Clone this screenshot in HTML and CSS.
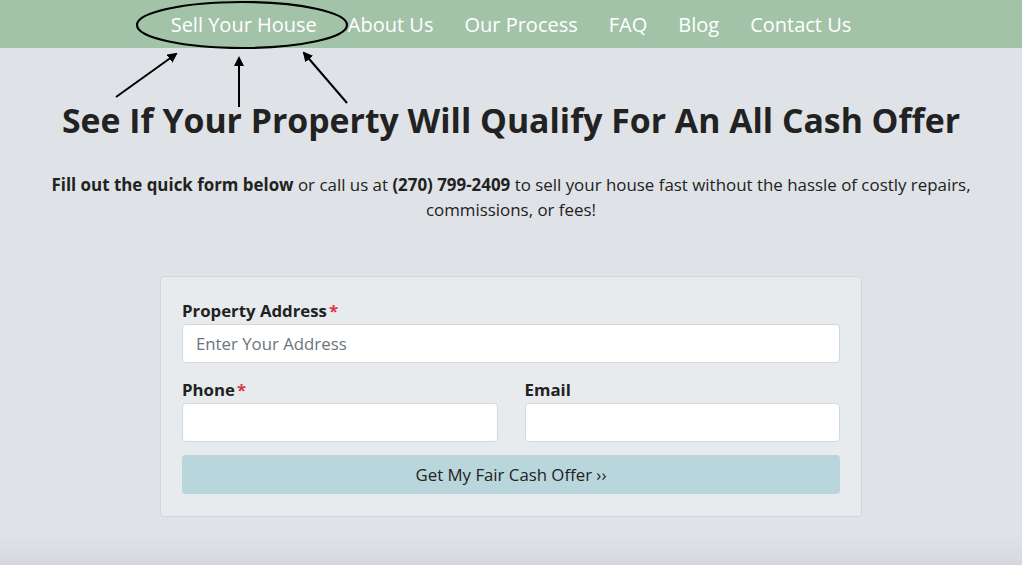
FILE: index.html
```html
<!DOCTYPE html>
<html lang="en">
<head>
<meta charset="utf-8">
<title>Sell Your House</title>
<link rel="stylesheet" href="styles.css">
</head>
<body>
<div class="page">
  <header class="topbar">
    <nav class="nav">
      <a href="#">Sell Your House</a>
      <a href="#">About Us</a>
      <a href="#">Our Process</a>
      <a href="#">FAQ</a>
      <a href="#">Blog</a>
      <a href="#">Contact Us</a>
    </nav>
  </header>
  <main class="main">
    <h1 class="title">See If Your Property Will Qualify For An All Cash Offer</h1>
    <p class="lead"><strong>Fill out the quick form below</strong> or call us at <strong>(270) 799-2409</strong> to sell your house fast without the hassle of costly repairs, commissions, or fees!</p>
    <form class="card">
      <div class="field">
        <label class="label">Property Address<span class="req">*</span></label>
        <input class="input" type="text" placeholder="Enter Your Address">
      </div>
      <div class="row">
        <div class="field">
          <label class="label">Phone<span class="req">*</span></label>
          <input class="input" type="text">
        </div>
        <div class="field">
          <label class="label">Email</label>
          <input class="input" type="text">
        </div>
      </div>
      <button class="btn" type="button">Get My Fair Cash Offer ››</button>
    </form>
  </main>
  <svg class="annot" width="420" height="120" viewBox="0 0 420 120">
    <defs>
      <marker id="ah" markerWidth="10" markerHeight="10" refX="8" refY="5" orient="auto" markerUnits="userSpaceOnUse">
        <path d="M0,0 L10,5 L0,10 Z" fill="#000"/>
      </marker>
    </defs>
    <ellipse cx="242" cy="25" rx="105" ry="23" fill="none" stroke="#000" stroke-width="2.2"/>
    <line x1="116" y1="97" x2="176" y2="54" stroke="#000" stroke-width="2" marker-end="url(#ah)"/>
    <line x1="239" y1="107" x2="239" y2="58" stroke="#000" stroke-width="2" marker-end="url(#ah)"/>
    <line x1="347" y1="103" x2="304" y2="53" stroke="#000" stroke-width="2" marker-end="url(#ah)"/>
  </svg>
</div>
</body>
</html>
```
FILE: styles.css
```css
html, body {
  margin: 0;
  padding: 0;
  background: #ffffff;
}
body {
  font-family: "Open Sans", "Noto Sans", sans-serif;
  color: #222;
}
.page {
  position: relative;
  width: 1022px;
  min-height: 565px;
  background: linear-gradient(to bottom, #dfe2e6 0, #dfe2e6 535px, #d5d9dd 565px);
  overflow: hidden;
}
.topbar {
  height: 48px;
  background: #a3c3a8;
  display: flex;
  justify-content: center;
  align-items: center;
}
.nav {
  display: flex;
  gap: 31px;
  margin-top: 1px;
}
.nav a {
  color: #ffffff;
  text-decoration: none;
  font-size: 20px;
  line-height: 28px;
}
.main {
  display: flex;
  flex-direction: column;
  align-items: center;
}
.title {
  margin: 52px 0 0;
  font-size: 33.8px;
  line-height: 40px;
  font-weight: 700;
  color: #222;
  text-align: center;
  white-space: nowrap;
}
.lead {
  margin: 32px 0 0;
  width: 960px;
  font-size: 16.9px;
  line-height: 25px;
  text-align: center;
  color: #222;
}
.lead strong {
  font-weight: 700;
}
.card {
  box-sizing: border-box;
  margin-top: 54px;
  width: 702px;
  padding: 22px 21px 22px;
  background: #e8ebee;
  border: 1px solid #d2d6da;
  border-radius: 4px;
  display: flex;
  flex-direction: column;
  gap: 13px;
}
.field {
  display: flex;
  flex-direction: column;
  gap: 1px;
  flex: 1;
}
.row {
  display: flex;
  gap: 27px;
  margin-top: 2px;
}
.label {
  font-size: 16.8px;
  line-height: 24px;
  font-weight: 700;
  color: #222;
}
.req {
  color: #dc3545;
  margin-left: 2px;
}
.input {
  box-sizing: border-box;
  height: 39px;
  width: 100%;
  border: 1px solid #d4d8dc;
  border-radius: 4px;
  background: #fff;
  padding: 0 13px;
  font-family: "Open Sans", "Noto Sans", sans-serif;
  font-size: 16.8px;
  color: #222;
  outline: none;
}
.input::placeholder {
  color: #6c757d;
}
.btn {
  height: 39px;
  border: none;
  border-radius: 4px;
  background: #b8d6dc;
  font-family: "Open Sans", "Noto Sans", sans-serif;
  font-size: 16.8px;
  color: #222;
  cursor: pointer;
}
.annot {
  position: absolute;
  left: 0;
  top: 0;
  pointer-events: none;
}
```
